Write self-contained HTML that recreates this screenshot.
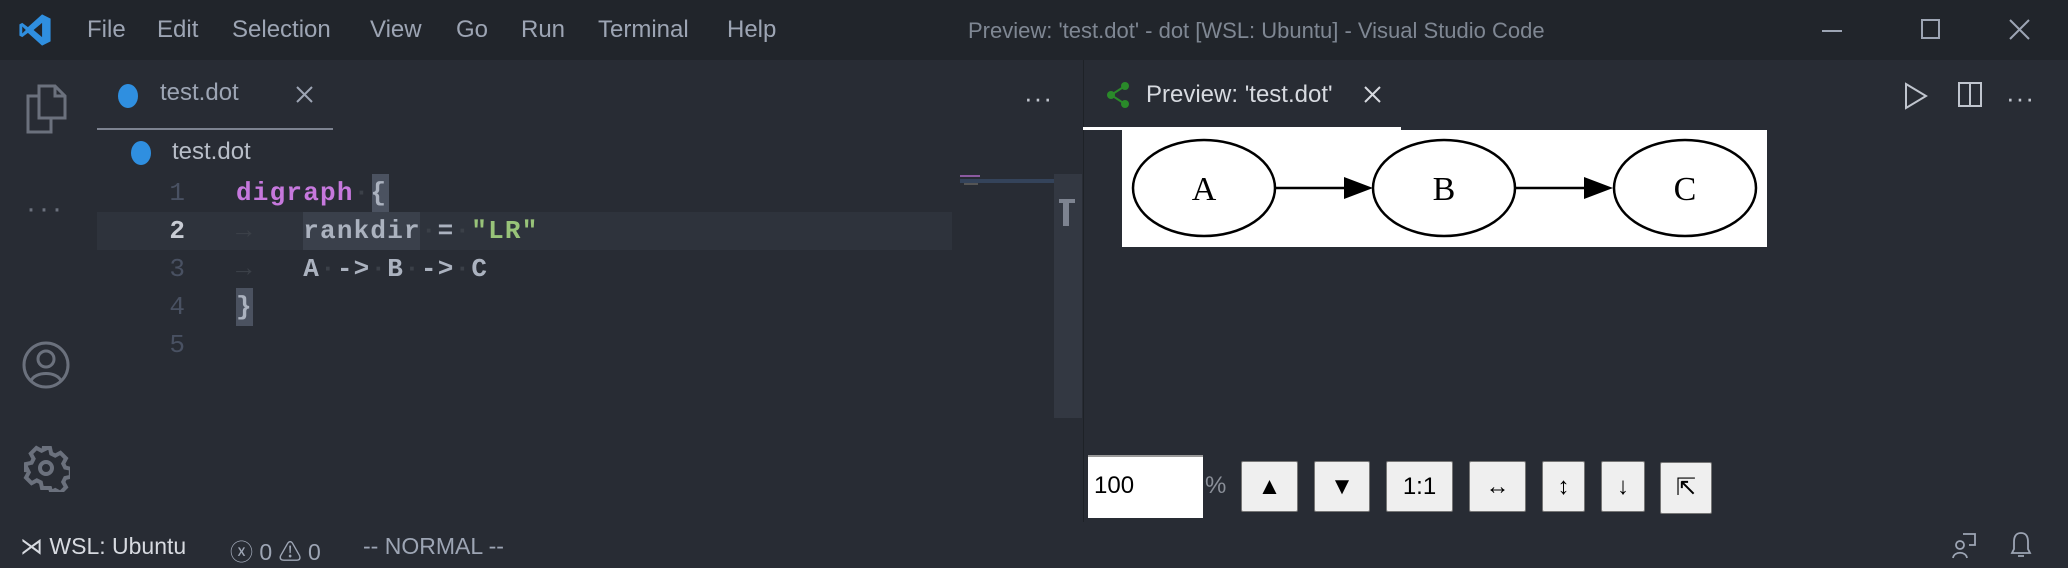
<!DOCTYPE html>
<html><head><meta charset="utf-8"><style>
*{margin:0;padding:0;box-sizing:border-box}
body{width:2068px;height:568px;background:#282c34;position:relative;overflow:hidden;font-family:"Liberation Sans",sans-serif;color:#9da5b4}
.a{position:absolute}
#title{left:0;top:0;width:2068px;height:60px;background:#21252b}
.menu{top:16px;font-size:24px;color:#9da5b4}
.code{font-family:"Liberation Mono",monospace;font-size:26px;letter-spacing:1.2px;white-space:pre;color:#abb2bf}
.ln{font-family:"Liberation Mono",monospace;font-size:26px;color:#495162;width:40px;text-align:right;left:145px}
.btn{background:#efefef;border:1px solid #767676;border-radius:2px;color:#000;font-size:24px;text-align:center;top:461px;height:51px;line-height:49px}
.ws{color:#3b4048}
</style></head><body>
<div id="title" class="a"></div>
<svg class="a" style="left:18px;top:13px" width="34" height="34" viewBox="0 0 24 24"><path d="M17 1 L23 4 V20 L17 23 L7 14 L3 17 L1 16 V8 L3 7 L7 10 Z M17 7 L11 12 L17 17 Z M3 9.5 V14.5 L5.5 12 Z" fill="#2f8fe0"/></svg>
<div class="a menu" style="left:87px">File</div>
<div class="a menu" style="left:157px">Edit</div>
<div class="a menu" style="left:232px">Selection</div>
<div class="a menu" style="left:370px">View</div>
<div class="a menu" style="left:456px">Go</div>
<div class="a menu" style="left:521px">Run</div>
<div class="a menu" style="left:598px">Terminal</div>
<div class="a menu" style="left:727px">Help</div>
<div class="a menu" style="left:968px;color:#7f8793;font-size:22px;top:18px">Preview: 'test.dot' - dot [WSL: Ubuntu] - Visual Studio Code</div>
<div class="a" style="left:1822px;top:30px;width:20px;height:2px;background:#9da5b4"></div>
<div class="a" style="left:1921px;top:19px;width:19px;height:20px;border:2px solid #9da5b4"></div>
<svg class="a" style="left:2009px;top:19px" width="21" height="21"><path d="M1 1L20 20M20 1L1 20" stroke="#9da5b4" stroke-width="2"/></svg>
<!-- activity -->
<svg class="a" style="left:25px;top:84px" width="44" height="50" viewBox="0 0 44 50" fill="none" stroke="#6b717d" stroke-width="3"><path d="M14 2H30L40 12V34H14Z M30 2V12H40 M14 12H3V48H26V34"/></svg>
<div class="a" style="left:26px;top:192px;font-size:30px;color:#6b717d;letter-spacing:3px">···</div>
<svg class="a" style="left:22px;top:340px" width="48" height="50" viewBox="0 0 48 50" fill="none" stroke="#6b717d" stroke-width="3"><circle cx="24" cy="25" r="22"/><circle cx="24" cy="19" r="8"/><path d="M9 41C13 31 35 31 39 41"/></svg>
<svg class="a" style="left:22px;top:444px" width="48" height="48" viewBox="0 0 24 24" fill="none" stroke="#6b717d" stroke-width="2"><circle cx="12" cy="12" r="3"/><path d="M10 2h4l.6 2.8 2 1 2.6-1.4 2.8 2.8-1.4 2.6 1 2 2.8.6v4l-2.8.6-1 2 1.4 2.6-2.8 2.8-2.6-1.4-2 1L14 22h-4l-.6-2.8-2-1-2.6 1.4-2.8-2.8 1.4-2.6-1-2L2 14v-4l2.8-.6 1-2-1.4-2.6 2.8-2.8 2.6 1.4 2-1z"/></svg>
<!-- left tab -->
<div class="a" style="left:118px;top:84px;width:20px;height:24px;border-radius:50%;background:#2f8fe0"></div>
<div class="a" style="left:160px;top:79px;font-size:24px;color:#9da5b4">test.dot</div>
<svg class="a" style="left:296px;top:86px" width="17" height="17"><path d="M1 1L16 16M16 1L1 16" stroke="#9da5b4" stroke-width="2"/></svg>
<div class="a" style="left:97px;top:128px;width:236px;height:2px;background:#7d8390"></div>
<div class="a" style="left:1024px;top:83px;font-size:26px;color:#c0c5ce;letter-spacing:1px">···</div>
<div class="a" style="left:131px;top:141px;width:20px;height:24px;border-radius:50%;background:#2f8fe0"></div>
<div class="a" style="left:172px;top:138px;font-size:24px;color:#b8bec8">test.dot</div>
<!-- code -->
<div class="a" style="left:97px;top:212px;width:855px;height:38px;background:#2e333c"></div>
<div class="a" style="left:372px;top:174px;width:17px;height:38px;background:#4b5260"></div>
<div class="a" style="left:303px;top:212px;width:117px;height:38px;background:#3a404b"></div>
<div class="a" style="left:236px;top:288px;width:17px;height:38px;background:#4b5260"></div>
<div class="a ln" style="top:178px">1</div>
<div class="a ln" style="top:216px;color:#c8ccd4;font-weight:bold">2</div>
<div class="a ln" style="top:254px">3</div>
<div class="a ln" style="top:292px">4</div>
<div class="a ln" style="top:330px">5</div>
<div class="a code" style="left:236px;top:178px;font-weight:bold"><span style="color:#c678dd">digraph</span><span class="ws">·</span>{</div>
<div class="a code" style="left:236px;top:216px;font-weight:bold"><span class="ws">→   </span>rankdir<span class="ws">·</span>=<span class="ws">·</span><span style="color:#98c379">"LR"</span></div>
<div class="a code" style="left:236px;top:254px;font-weight:bold"><span class="ws">→   </span>A<span class="ws">·</span>-&gt;<span class="ws">·</span>B<span class="ws">·</span>-&gt;<span class="ws">·</span>C</div>
<div class="a code" style="left:236px;top:292px;font-weight:bold">}</div>
<!-- minimap -->
<div class="a" style="left:960px;top:175px;width:20px;height:2px;background:#8b5aa0"></div>
<div class="a" style="left:960px;top:179px;width:94px;height:4px;background:#34435a"></div>
<div class="a" style="left:964px;top:183px;width:14px;height:2px;background:#555"></div>
<div class="a" style="left:1054px;top:174px;width:28px;height:244px;background:#333842"></div>
<div class="a" style="left:1059px;top:199px;width:16px;height:4px;background:#7d8390"></div>
<div class="a" style="left:1063px;top:199px;width:6px;height:27px;background:#7d8390"></div>
<div class="a" style="left:1083px;top:60px;width:1px;height:462px;background:#1e2227"></div>
<!-- right tab -->
<svg class="a" style="left:1105px;top:82px" width="26" height="26" viewBox="0 0 26 26"><path d="M20 4L6 13L20 22" stroke="#2a8a2a" stroke-width="2" fill="none"/><circle cx="20" cy="4" r="4" fill="#2a8a2a"/><circle cx="6" cy="13" r="4" fill="#2a8a2a"/><circle cx="20" cy="22" r="4" fill="#2a8a2a"/></svg>
<div class="a" style="left:1146px;top:81px;font-size:24px;color:#d7dae0">Preview: 'test.dot'</div>
<svg class="a" style="left:1364px;top:86px" width="17" height="17"><path d="M1 1L16 16M16 1L1 16" stroke="#d7dae0" stroke-width="2"/></svg>
<div class="a" style="left:1083px;top:127px;width:318px;height:3px;background:#fff"></div>
<svg class="a" style="left:1904px;top:82px" width="24" height="28"><path d="M2 2L22 14L2 26Z" fill="none" stroke="#c0c5ce" stroke-width="2"/></svg>
<div class="a" style="left:1958px;top:82px;width:24px;height:25px;border:2px solid #c0c5ce"></div>
<div class="a" style="left:1969px;top:82px;width:2px;height:25px;background:#c0c5ce"></div>
<div class="a" style="left:2006px;top:83px;font-size:26px;color:#c0c5ce;letter-spacing:1px">···</div>
<!-- graph -->
<svg class="a" style="left:1122px;top:130px" width="645" height="117" viewBox="0 0 645 117">
<rect width="645" height="117" fill="#fff"/>
<g fill="none" stroke="#000" stroke-width="2.5">
<ellipse cx="82" cy="58" rx="71" ry="48"/><ellipse cx="322" cy="58" rx="71" ry="48"/><ellipse cx="563" cy="58" rx="71" ry="48"/>
<path d="M153 58H225M393 58H465"/></g>
<path d="M222 47L251 58L222 69Z M462 47L491 58L462 69Z"/>
<g font-family="Liberation Serif,serif" font-size="34" text-anchor="middle"><text x="82" y="70">A</text><text x="322" y="70">B</text><text x="563" y="70">C</text></g>
</svg>
<!-- controls -->
<div class="a" style="left:1088px;top:455px;width:115px;height:63px;background:#fff;border-top:2px solid #999;color:#000;font-size:24px;padding:15px 6px">100</div>
<div class="a" style="left:1205px;top:472px;font-size:24px;color:#8a8f98">%</div>
<div class="a btn" style="left:1241px;width:57px">▲</div>
<div class="a btn" style="left:1314px;width:56px">▼</div>
<div class="a btn" style="left:1386px;width:67px">1:1</div>
<div class="a btn" style="left:1469px;width:57px">↔</div>
<div class="a btn" style="left:1542px;width:43px">↕</div>
<div class="a btn" style="left:1601px;width:44px">↓</div>
<div class="a btn" style="left:1660px;width:52px;top:462px;height:52px">⇱</div>
<!-- status -->
<div class="a" style="left:20px;top:533px;font-size:23px;color:#d7dae0">⋊ WSL: Ubuntu</div>
<div class="a" style="left:230px;top:533px;font-size:23px;color:#9da5b4">ⓧ 0 ⚠ 0</div>
<div class="a" style="left:363px;top:533px;font-size:23px;color:#9da5b4">-- NORMAL --</div>
<svg class="a" style="left:1951px;top:531px" width="26" height="28" fill="none" stroke="#9da5b4" stroke-width="1.8"><circle cx="9" cy="14" r="4"/><path d="M2 27C3 20 15 20 16 27M12 3H24V14H18"/></svg>
<svg class="a" style="left:2010px;top:530px" width="22" height="30" fill="none" stroke="#9da5b4" stroke-width="1.8"><path d="M11 3C5 3 4 8 4 12V19L2 23H20L18 19V12C18 8 17 3 11 3ZM8 26H14"/></svg>
</body></html>
